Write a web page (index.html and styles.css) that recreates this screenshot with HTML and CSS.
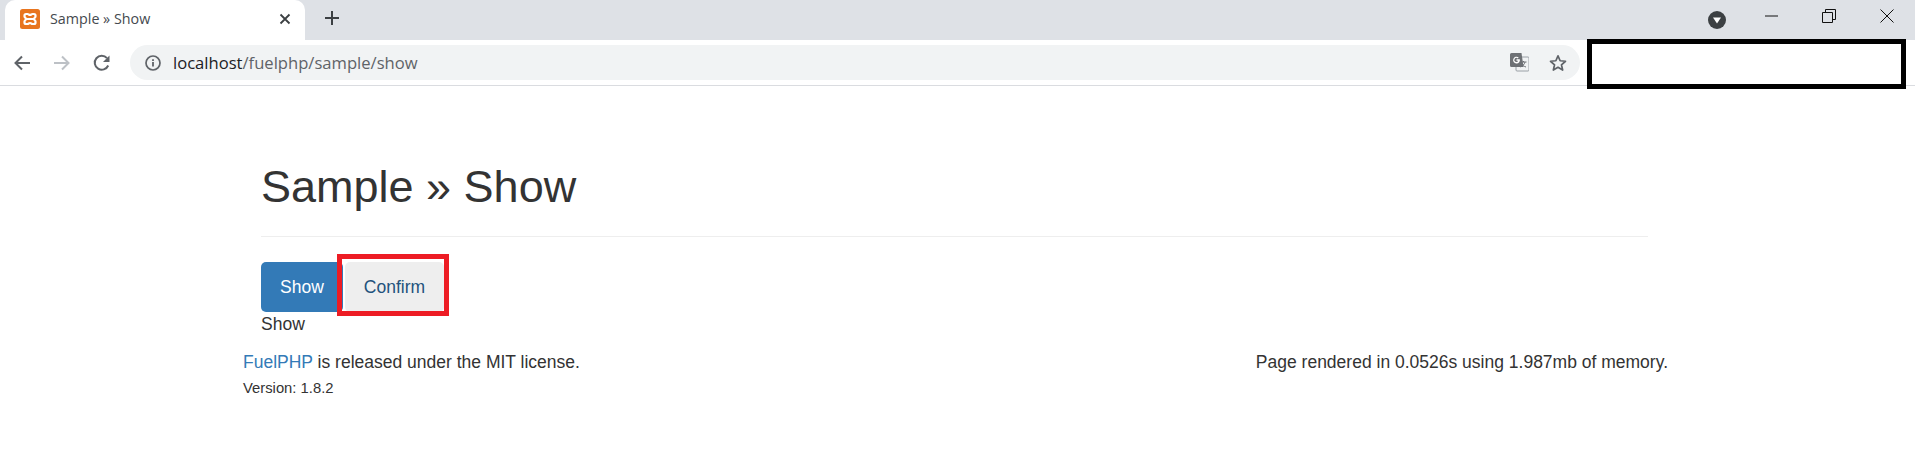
FILE: index.html
```html
<!DOCTYPE html>
<html lang="en">
  <head>
    <meta charset="UTF-8" />
    <meta name="viewport" content="width=device-width, initial-scale=1.0" />
    <title>Sample &raquo; Show</title>
    <link rel="stylesheet" href="styles.css">
  </head>
  <body>
    <div class="browser">
      <div class="tab-strip">
        <div class="tab">
          <svg class="favicon" width="20" height="20" viewBox="0 0 20 20">
            <rect width="20" height="20" rx="2.500" fill="#e8751f" />
            <path d="M6 5h1.500c1 0 1.500 1 2.500 1s1.500-1 2.500-1H14c1 0 1.500.5 1.500 1.500v1c0 1-1 1.500-2 2.500 1 1 2 1.500 2 2.500v1c0 1-.5 1.500-1.500 1.500h-1.500c-1 0-1.500-1-2.500-1s-1.500 1-2.500 1H6c-1 0-1.500-.5-1.500-1.500v-1c0-1 1-1.500 2-2.500-1-1-2-1.500-2-2.500v-1C4.500 5.500 5 5 6 5z" stroke="#fff" stroke-width="2.200" fill="none" />
            <path d="M7 10h6" stroke="#fff" stroke-width="2" fill="none" />
          </svg>
          <span class="tab-title">Sample &raquo; Show</span>
          <svg class="tab-close" width="12" height="12" viewBox="0 0 12 12">
            <path d="M1.500 1.500l9 9M10.500 1.500l-9 9" stroke="#3c4043" stroke-width="1.800" fill="none" />
          </svg>
        </div>
        <svg class="new-tab" width="16" height="16" viewBox="0 0 16 16">
          <path d="M8 1v14M1 8h14" stroke="#3c4043" stroke-width="2" fill="none" />
        </svg>
        <div class="window-controls">
          <span class="profile">
            <svg width="18" height="18" viewBox="0 0 18 18">
              <circle cx="9" cy="9" r="9" fill="#3c4043" />
              <path d="M5 6.500h8L9 12.500z" fill="#fff" />
            </svg>
          </span>
          <svg class="win-min" width="14" height="14" viewBox="0 0 14 14">
            <path d="M0 7h13" stroke="#111" stroke-width="1" fill="none" />
          </svg>
          <svg class="win-max" width="14" height="14" viewBox="0 0 14 14">
            <path d="M.5 3.500h10v10H.5zM3.500 3.500V.5h10v10h-3" stroke="#111" stroke-width="1" fill="none" />
          </svg>
          <svg class="win-close" width="14" height="14" viewBox="0 0 14 14">
            <path d="M.5.500l13 13M13.500.500l-13 13" stroke="#111" stroke-width="1" fill="none" />
          </svg>
        </div>
      </div>
      <div class="toolbar">
        <svg class="nav-icon" width="18" height="18" viewBox="0 0 18 18">
          <path d="M17 9H2.500M9 2.500L2.500 9 9 15.500" stroke="#5f6368" stroke-width="2" fill="none" />
        </svg>
        <svg class="nav-icon" width="18" height="18" viewBox="0 0 18 18">
          <path d="M1 9h14.500M9 2.500L15.500 9 9 15.500" stroke="#bdc1c6" stroke-width="2" fill="none" />
        </svg>
        <svg class="nav-icon" width="18" height="18" viewBox="0 0 18 18">
          <path d="M15.200 11.500A7 7 0 1 1 14 4.100" stroke="#5f6368" stroke-width="2" fill="none" />
          <path d="M16.500 1.500v6.500H10z" fill="#5f6368" />
        </svg>
        <div class="omnibox">
          <svg class="info-icon" width="16" height="16" viewBox="0 0 16 16">
            <circle cx="8" cy="8" r="7" stroke="#5f6368" stroke-width="1.700" fill="none" />
            <path d="M7.100 7h1.800v4.600H7.100zM7.100 4.200h1.800V6H7.100z" fill="#5f6368" />
          </svg>
          <span class="url"><span class="url-host">localhost</span>/fuelphp/sample/show</span>
          <svg class="translate-icon" width="19" height="19" viewBox="0 0 19 19">
            <rect x="6" y="4" width="13" height="14" rx="1" fill="#f1f3f4" stroke="#9aa0a6" stroke-width="1" />
            <path d="M1.500 0h10l2 14H1.500A1.500 1.500 0 0 1 0 12.500v-11A1.500 1.500 0 0 1 1.500 0z" fill="#6e7175" />
            <path d="M9.800 6.200H6.500v1.500h1.700a2 2 0 1 1-.5-2.200l1-1a3.400 3.400 0 1 0 1.100 1.700z" fill="#fff" />
            <path d="M10.500 9h6M13.500 8v1M15 9c-.5 2.500-2.500 4-4.500 5M11.500 10.500c.7 1.500 2.500 3 4.500 3.500" stroke="#6e7175" stroke-width="1" fill="none" />
          </svg>
          <svg class="star-icon" width="18" height="18" viewBox="0 0 18 18">
            <path d="M9 1.800l2.150 4.950 5.350.5-4.050 3.550 1.200 5.250L9 13.300l-4.650 2.750 1.200-5.250L1.500 7.250l5.350-.5z" stroke="#5f6368" stroke-width="1.700" stroke-linejoin="round" fill="none" />
          </svg>
        </div>
      </div>
      <div class="redaction"></div>
    </div>

    <div class="container">
      <h1 class="page-title">Sample &raquo; Show</h1>
      <ul class="pills">
        <li><a class="pill pill-active" href="#">Show</a></li>
        <li class="pill-marked"><a class="pill" href="#">Confirm</a></li>
      </ul>
      <p class="content-text">Show</p>
    </div>

    <footer class="footer">
      <div class="footer-row">
        <p><a href="#">FuelPHP</a> is released under the MIT license.</p>
        <p>Page rendered in 0.0526s using 1.987mb of memory.</p>
      </div>
      <small class="version">Version: 1.8.2</small>
    </footer>
  </body>
</html>
```

FILE: styles.css
```css
/* Basic Reset */
* {
  margin: 0;
  padding: 0;
  box-sizing: border-box;
}

body {
  font-family: "Liberation Sans", Arial, sans-serif;
  font-size: 17.500px;
  color: #333;
  background-color: #fff;
  overflow: hidden;
}

a {
  text-decoration: none;
  color: #337ab7;
}

/* Browser chrome */
.browser {
  position: relative;
  height: 86px;
  border-bottom: 1px solid #dadce0;
}

.tab-strip {
  display: flex;
  align-items: center;
  height: 40px;
  background-color: #dee1e6;
  padding-left: 5px;
}

.tab {
  display: flex;
  align-items: center;
  width: 300px;
  height: 40px;
  padding: 0 14px 3px 15px;
  background-color: #fff;
  border-radius: 10px 10px 0 0;
}

.favicon {
  flex: none;
}

.tab-title {
  flex: 1;
  margin-left: 10px;
  font-family: "Open Sans", sans-serif;
  font-size: 14.300px;
  color: #45494e;
}

.new-tab {
  margin-left: 19px;
  margin-bottom: 4px;
}

.window-controls {
  display: flex;
  align-items: center;
  margin-left: auto;
  height: 40px;
}

.profile {
  display: flex;
  margin-right: 39px;
}

.win-min {
  margin-right: 43px;
  margin-bottom: 8px;
}

.win-max {
  margin-right: 44px;
  margin-bottom: 8px;
}

.win-close {
  margin-right: 21px;
  margin-bottom: 8px;
}

.toolbar {
  display: flex;
  align-items: center;
  height: 45px;
  padding-left: 13px;
  background-color: #fff;
}

.nav-icon {
  margin-right: 22px;
}

.omnibox {
  display: flex;
  align-items: center;
  width: 1450px;
  height: 35px;
  margin-left: -3px;
  padding: 0 10px;
  background-color: #f1f3f4;
  border-radius: 18px;
}

.info-icon {
  margin-left: 5px;
}

.url {
  flex: 1;
  margin-left: 12px;
  font-family: "Open Sans", sans-serif;
  font-size: 16.600px;
  color: #5f6368;
}

.url-host {
  color: #202124;
}

.translate-icon {
  margin-right: 20px;
}

.star-icon {
  margin-right: 3px;
}

/* Black box laid over the toolbar */
.redaction {
  position: absolute;
  left: 1587px;
  top: 39px;
  width: 319px;
  height: 50px;
  background-color: #fff;
  border: 5px solid #000;
}

/* Page */
.container {
  width: 1387px;
  margin-left: 261px;
}

.page-title {
  margin-top: 76px;
  padding-bottom: 25px;
  font-size: 45px;
  font-weight: 400;
  line-height: 49px;
  color: #333;
  border-bottom: 1px solid #eee;
}

.pills {
  display: flex;
  margin-top: 25px;
  list-style: none;
}

.pill {
  display: block;
  padding: 13px 19px;
  line-height: 24px;
  border-radius: 5px;
}

.pill-active {
  background-color: #337ab7;
  color: #fff;
}

.pill-marked {
  margin-left: 2px;
  position: relative;
}

.pill-marked .pill {
  background-color: #eee;
  color: #23527c;
}

/* Red marker drawn on top of the Confirm pill */
.pill-marked::after {
  content: "";
  position: absolute;
  top: -8px;
  right: -5px;
  bottom: -4px;
  left: -8px;
  border: 5px solid #ed1c24;
}

.content-text {
  line-height: 24px;
}

/* Footer */
.footer {
  width: 1425px;
  margin-left: 243px;
  margin-top: 14px;
}

.footer-row {
  display: flex;
  justify-content: space-between;
  line-height: 24px;
}

.version {
  display: block;
  margin-top: 4px;
  font-size: 14.800px;
  line-height: 20px;
}
```
